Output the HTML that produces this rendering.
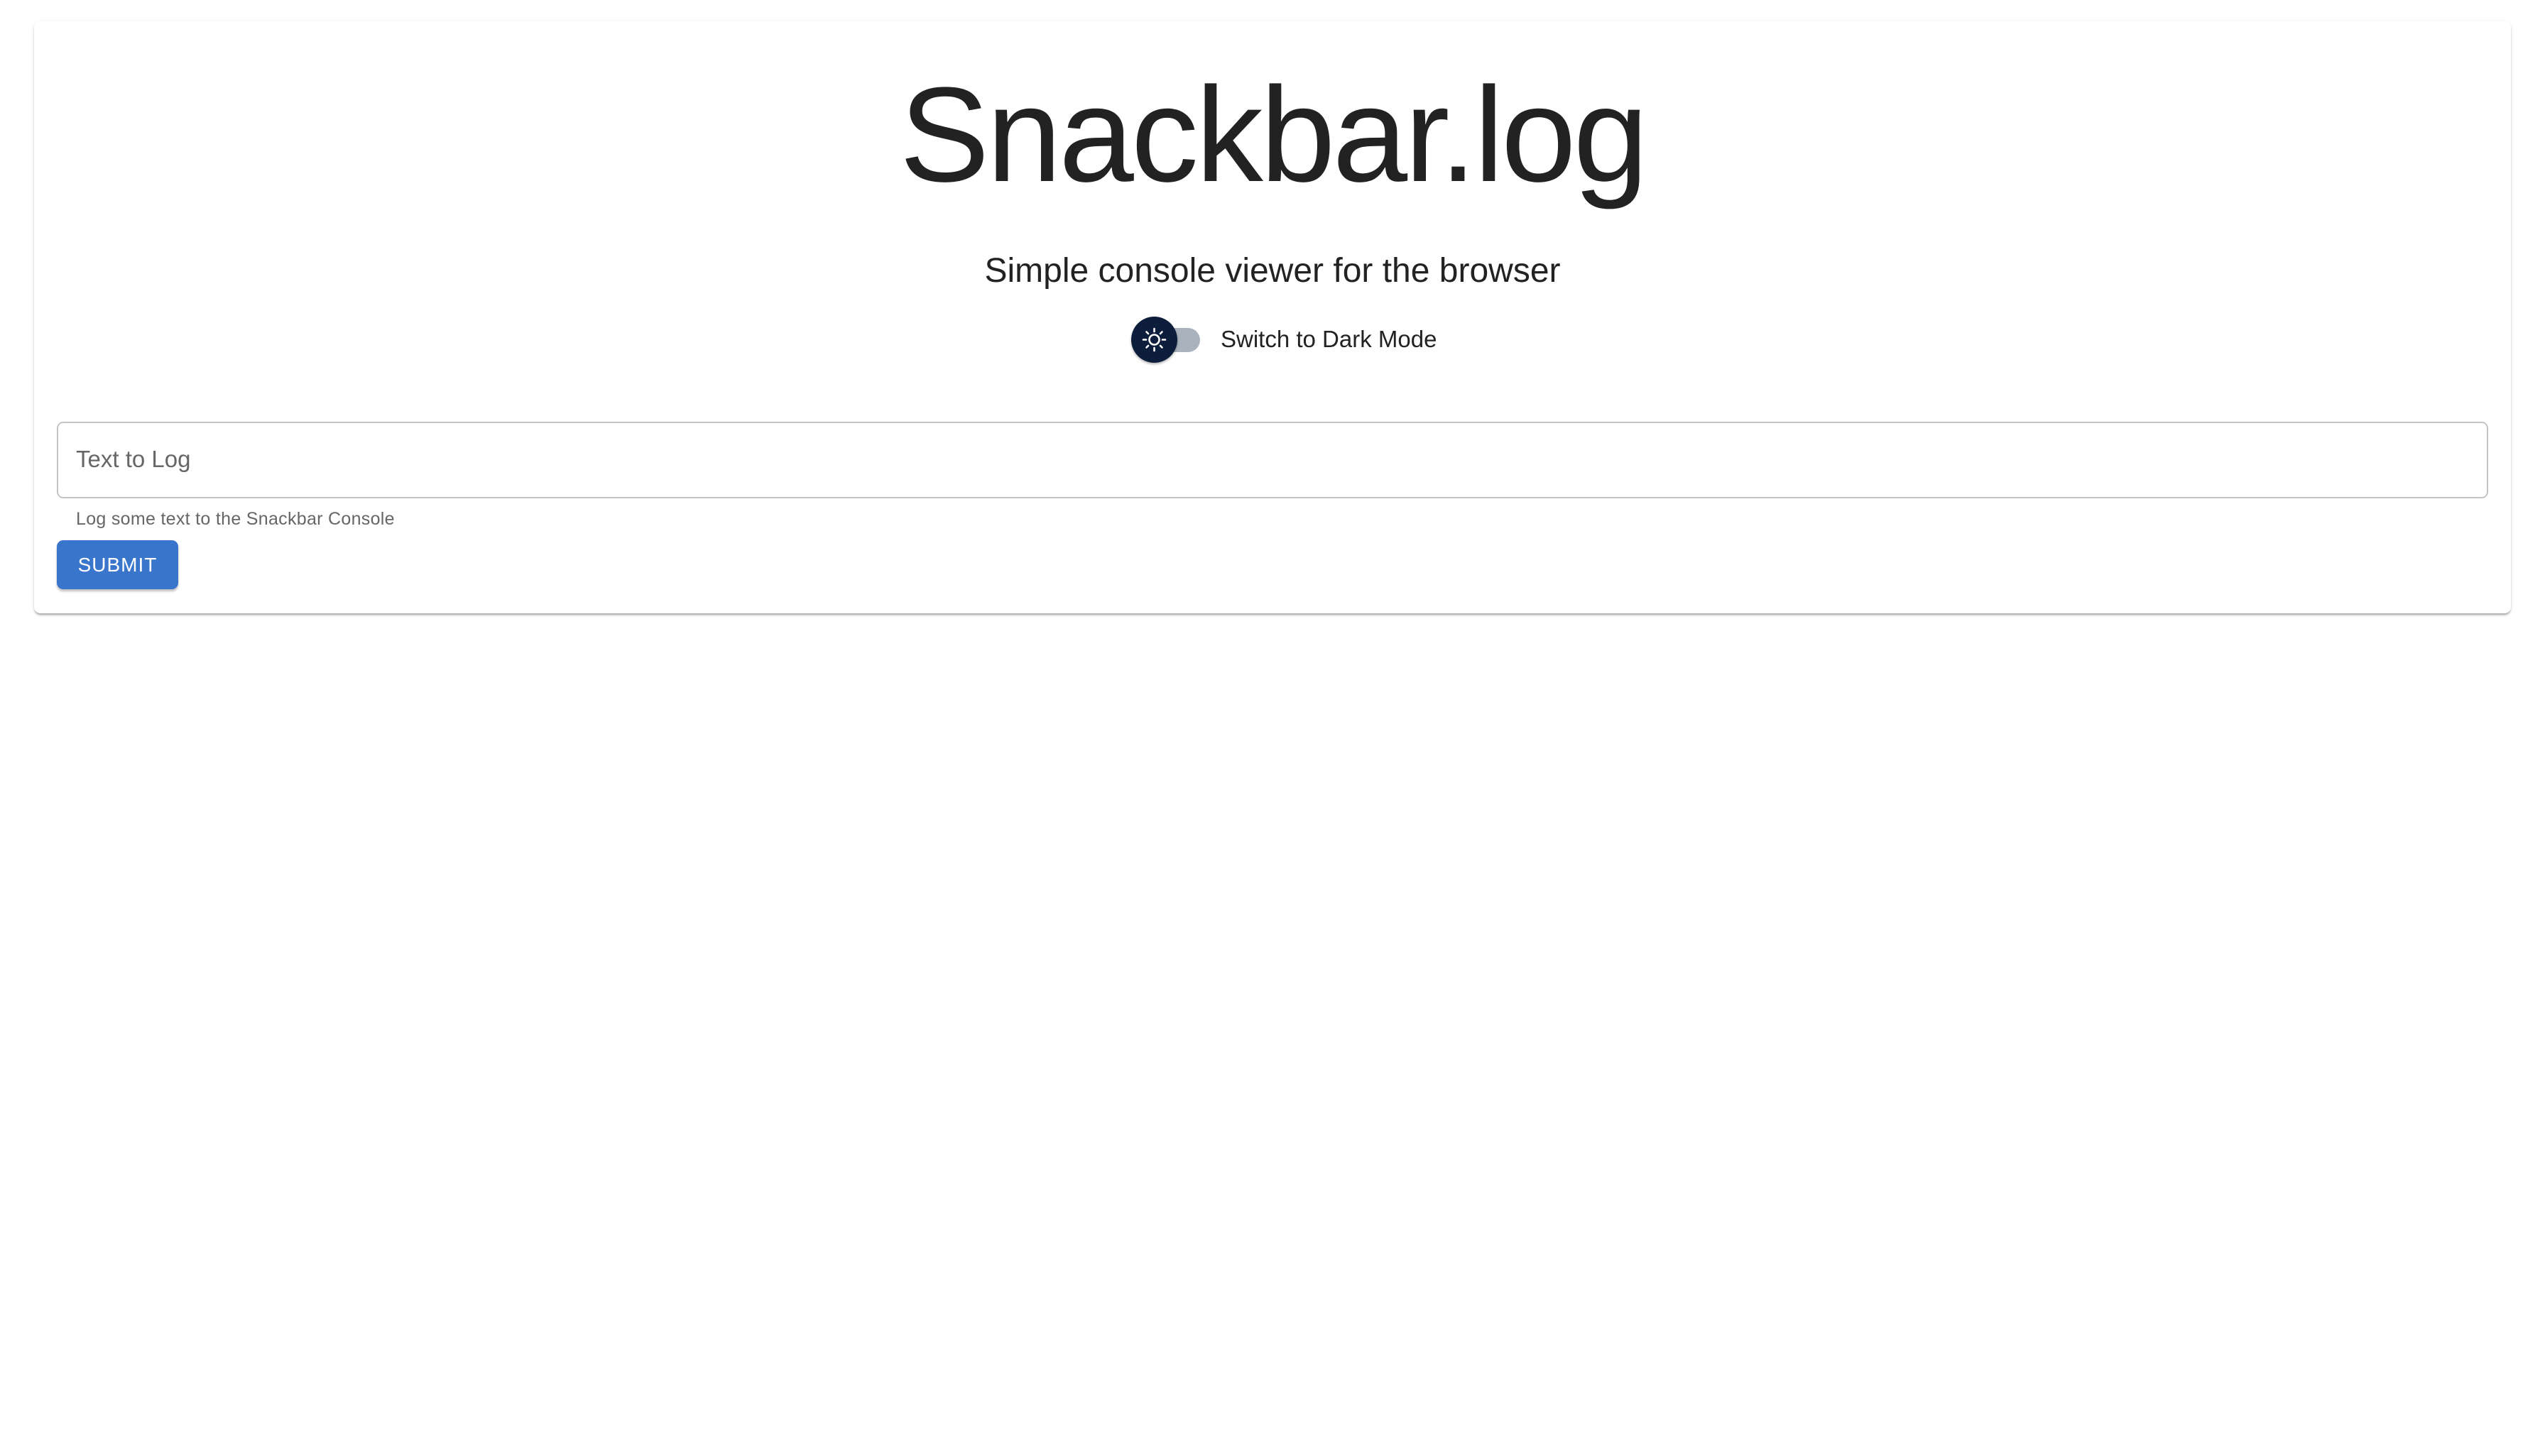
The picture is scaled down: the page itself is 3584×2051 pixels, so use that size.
<!DOCTYPE html>
<html><head><meta charset="utf-8"><style>
html,body{margin:0;padding:0;background:#fff;width:3584px;height:2051px;overflow:hidden;font-family:"Liberation Sans",Arial,sans-serif;color:#212121}
.card{position:absolute;left:48px;top:30px;width:3488px;height:834px;background:#fff;border-radius:9px;box-shadow:0 4px 3px -2px rgba(0,0,0,.2),0 2px 2px rgba(0,0,0,.14),0 2px 6px rgba(0,0,0,.1)}
.title{position:absolute;left:0;right:0;top:70px;text-align:center;font-size:190px;font-weight:300;line-height:240px;color:#222;letter-spacing:-4px}
.sub{position:absolute;left:0;right:0;top:347px;text-align:center;font-size:48px;line-height:70px;color:#222}
.track{position:absolute;left:1612px;top:462px;width:78px;height:34px;border-radius:17px;background:#a9b2bd}
.knob{position:absolute;left:1593px;top:446px;width:65px;height:65px;border-radius:50%;background:#0c1e3b;box-shadow:0 2px 3px rgba(0,0,0,.3)}
.lbl{position:absolute;left:1719px;top:458px;font-size:33px;line-height:40px;color:#222}
.input{position:absolute;left:80px;top:594px;width:3420px;height:104px;border:2px solid #c4c4c4;border-radius:9px}
.ph{position:absolute;left:107px;top:626px;font-size:33px;line-height:42px;color:#666}
.help{position:absolute;left:107px;top:716px;font-size:25px;line-height:30px;color:#666;letter-spacing:.3px}
.btn{position:absolute;left:80px;top:761px;width:171px;height:69px;border-radius:9px;background:#3a75cc;box-shadow:0 3px 3px rgba(0,0,0,.25);color:#fff;font-size:28px;letter-spacing:1px;text-align:center;line-height:69px}
</style></head><body>
<div class="card"></div>
<div class="title">Snackbar.log</div>
<div class="sub">Simple console viewer for the browser</div>
<div class="track"></div>
<div class="knob"><svg width="65" height="65" viewBox="0 0 65 65" fill="none" stroke="#fff" stroke-width="2.6" stroke-linecap="round">
<circle cx="32.5" cy="32.5" r="7"/>
<path d="M32.5 17v4M32.5 44v4M17 32.5h4M44 32.5h4M21.5 21.5l2.5 2.5M41 41l2.5 2.5M21.5 43.5l2.5-2.5M41 24l2.5-2.5"/></svg></div>
<div class="lbl">Switch to Dark Mode</div>
<div class="input"></div>
<div class="ph">Text to Log</div>
<div class="help">Log some text to the Snackbar Console</div>
<div class="btn">SUBMIT</div>
</body></html>
